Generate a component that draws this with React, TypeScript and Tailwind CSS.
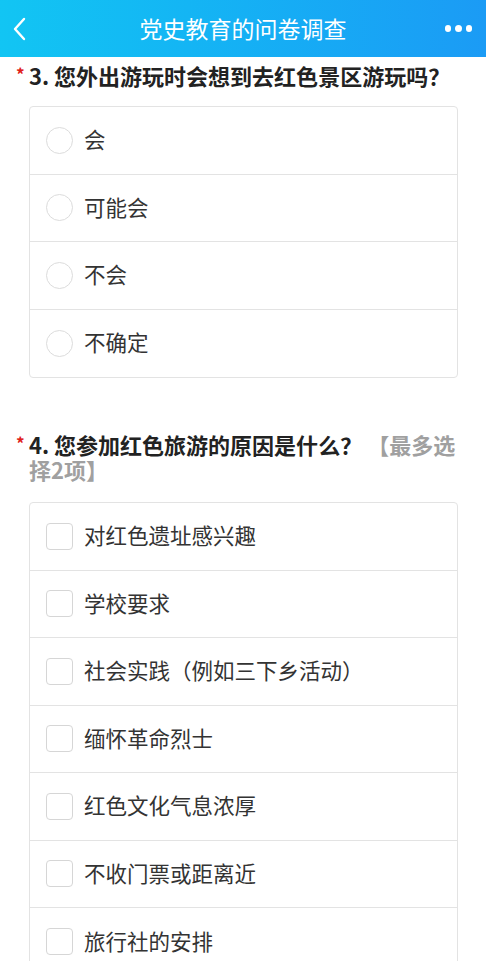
import React from 'react';

const Q3 = ['会', '可能会', '不会', '不确定'];
const Q4 = ['对红色遗址感兴趣', '学校要求', '社会实践（例如三下乡活动）', '缅怀革命烈士', '红色文化气息浓厚', '不收门票或距离近', '旅行社的安排'];

const font = { fontFamily: "'Noto Sans CJK SC', 'Noto Sans', sans-serif" };

function Row({ label, type, last }: { label: string; type: 'radio' | 'check'; last: boolean }) {
  return (
    <div className={`flex h-[67.5px] items-center gap-[11px] pl-[16px] ${last ? '' : 'border-b border-[#e3e3e3]'}`}>
      <span
        className={
          type === 'radio'
            ? 'h-[27px] w-[27px] shrink-0 rounded-full border border-[#dcdcdc] bg-white'
            : 'h-[27px] w-[27px] shrink-0 rounded-[4px] border border-[#d6d6d6] bg-white'
        }
      />
      <span className="-mt-[3px] text-[21.5px] leading-none text-[#333]">{label}</span>
    </div>
  );
}

export default function App() {
  return (
    <div className="h-[961px] w-[486px] overflow-hidden bg-white" style={font}>
      <div className="grid h-[57px] grid-cols-[1fr_auto_1fr] items-center bg-gradient-to-r from-[#12c5f3] to-[#1b9bf5] px-[12px]">
        <svg width="16" height="26" viewBox="0 0 16 26" fill="none">
          <path d="M12 3 L3 13 L12 23" stroke="white" strokeWidth="2.4" strokeLinecap="round" strokeLinejoin="round" />
        </svg>
        <span className="text-[23px] leading-none text-white">党史教育的问卷调查</span>
        <div className="flex justify-end gap-[4px] pr-[2px]">
          <span className="h-[6.5px] w-[6.5px] rounded-full bg-white" />
          <span className="h-[6.5px] w-[6.5px] rounded-full bg-white" />
          <span className="h-[6.5px] w-[6.5px] rounded-full bg-white" />
        </div>
      </div>

      <div className="pl-[29px] pr-[28px]">
        <div className="relative mt-[6px] text-[22px] font-bold leading-[25px] text-[#222]">
          <span className="absolute left-[-13px] top-[-2px] text-[17px] text-[#e0201a]">*</span>
          3. 您外出游玩时会想到去红色景区游玩吗？
        </div>
        <div className="mt-[18px] overflow-hidden rounded-[4px] border border-[#e3e3e3]">
          {Q3.map((o, i) => (
            <Row key={o} label={o} type="radio" last={i === Q3.length - 1} />
          ))}
        </div>

        <div className="relative mt-[54px] text-[22px] font-bold leading-[25px] text-[#222]">
          <span className="absolute left-[-13px] top-[-2px] text-[17px] text-[#e0201a]">*</span>
          4. 您参加红色旅游的原因是什么？ <span className="text-[#a0a0a0]">【最多选择2项】</span>
        </div>
        <div className="mt-[20px] overflow-hidden rounded-[4px] border border-[#e3e3e3]">
          {Q4.map((o, i) => (
            <Row key={o} label={o} type="check" last={i === Q4.length - 1} />
          ))}
        </div>
      </div>
    </div>
  );
}
